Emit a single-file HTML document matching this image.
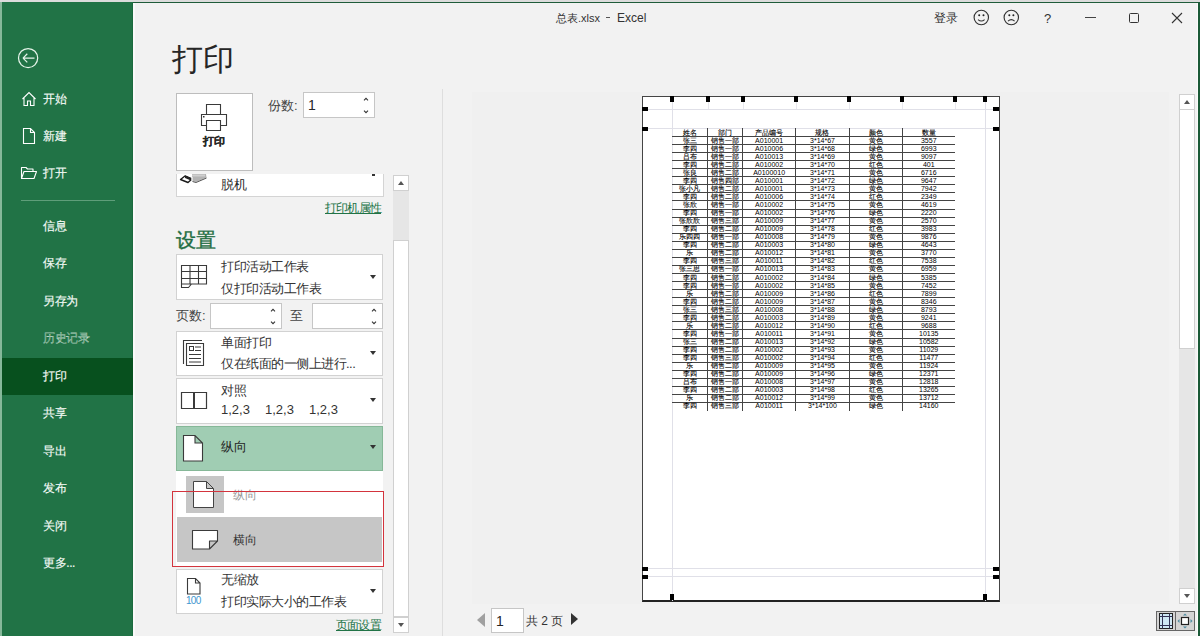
<!DOCTYPE html>
<html><head><meta charset="utf-8">
<style>
*{box-sizing:border-box;margin:0;padding:0}
html,body{width:1200px;height:636px;overflow:hidden;background:#f2f2f2;font-family:"Liberation Sans",sans-serif;color:#262626}
.a{position:absolute;white-space:nowrap}
#topstrip{left:0;top:0;width:1200px;height:2px;background:#dcdcdc}
#topline{left:133px;top:2px;width:1067px;height:1px;background:#1f5c3a}
#rightline{left:1198px;top:2px;width:2px;height:634px;background:#1b5a37}
#leftstrip{left:0;top:2px;width:2px;height:634px;background:#86b89a}
#side{left:2px;top:2px;width:131px;height:634px;background:#217346}
.nav{position:absolute;left:43px;color:#f4faf6;font-size:12px;letter-spacing:-0.4px;line-height:14px;-webkit-text-stroke:0.15px #f4faf6}
#sel{left:2px;top:358px;width:131px;height:37px;background:#07501e}
#sep{left:21px;top:200px;width:94px;height:1px;background:#5f9e7a}

.box{left:176px;width:207px;background:#fff;border:1px solid #d2d2d2}
.t13{font-size:13px;letter-spacing:-0.5px;color:#333}
.arr{width:0;height:0;border-left:3.5px solid transparent;border-right:3.5px solid transparent;border-top:4px solid #333}
.tri-up{width:0;height:0;border-left:3.5px solid transparent;border-right:3.5px solid transparent;border-bottom:4px solid #555}
.tri-dn{width:0;height:0;border-left:3.5px solid transparent;border-right:3.5px solid transparent;border-top:4px solid #555}
.tc{font-size:7px;line-height:8px;text-align:center;color:#000}
.zh{-webkit-text-stroke:0.12px #000;color:#000}
</style></head><body>
<div class="a" id="topstrip"></div>
<div class="a" id="side"></div>
<div class="a" id="leftstrip"></div>
<div class="a" id="sel"></div>
<div class="a" id="sep"></div>
<div class="a" id="topline"></div>
<div class="a" id="rightline"></div>
<div class="a" style="left:1197px;top:3px;width:1px;height:633px;background:#fbfbfb"></div>

<!-- sidebar -->
<svg class="a" style="left:17px;top:47px" width="23" height="23" viewBox="0 0 23 23"><circle cx="11.1" cy="11.1" r="9.6" fill="none" stroke="#e6f4ea" stroke-width="1.25"/><path d="M6 11.1H17.5M6 11.1L10.3 6.8M6 11.1L10.3 15.4" fill="none" stroke="#e6f4ea" stroke-width="1.25"/></svg>
<div class="nav" style="top:92px">开始</div>
<div class="nav" style="top:129px">新建</div>
<div class="nav" style="top:166px">打开</div>
<div class="nav" style="top:219px">信息</div>
<div class="nav" style="top:256px">保存</div>
<div class="nav" style="top:294px">另存为</div>
<div class="nav" style="top:331px;color:#6ea585">历史记录</div>
<div class="nav" style="top:369px">打印</div>
<div class="nav" style="top:406px">共享</div>
<div class="nav" style="top:444px">导出</div>
<div class="nav" style="top:481px">发布</div>
<div class="nav" style="top:519px">关闭</div>
<div class="nav" style="top:556px">更多...</div>

<!-- title bar -->
<div class="a" style="left:556px;top:11px;font-size:11px;color:#333">总表.xlsx</div><div class="a" style="left:606px;top:17px;width:4px;height:1px;background:#555"></div><div class="a" style="left:617px;top:11px;font-size:12px;color:#333">Excel</div>

<!-- heading -->
<div class="a" style="left:172px;top:39px;font-size:31px;color:#262626">打印</div>


<!-- sidebar icons -->
<svg class="a" style="left:20px;top:90px" width="18" height="18" viewBox="0 0 18 18"><path d="M2.5 9L9 2.5L15.5 9M4 7.5V15.5H7.5V11H10.5V15.5H14V7.5" fill="none" stroke="#fff" stroke-width="1.1" stroke-linejoin="miter"/></svg>
<svg class="a" style="left:21px;top:127px" width="16" height="18" viewBox="0 0 16 18"><path d="M2.5 1.5H9.5L13.5 5.5V16.5H2.5Z M9.5 1.5V5.5H13.5" fill="none" stroke="#fff" stroke-width="1.1"/></svg>
<svg class="a" style="left:20px;top:166px" width="18" height="14" viewBox="0 0 18 14"><path d="M1.5 12.5V1.5H6L7.5 3H13V5.5 M1.5 12.5L4 5.5H16.5L14 12.5Z" fill="none" stroke="#fff" stroke-width="1.1" stroke-linejoin="round"/></svg>

<!-- content white edge -->
<div class="a" style="left:132px;top:3px;width:1px;height:355px;background:#1b6a3e"></div><div class="a" style="left:132px;top:395px;width:1px;height:241px;background:#1b6a3e"></div>
<div class="a" style="left:133px;top:3px;width:2px;height:633px;background:#fafafa"></div>

<!-- print button -->
<div class="a" style="left:176px;top:93px;width:77px;height:78px;background:#fff;border:1px solid #bdbdbd"></div>
<svg class="a" style="left:199px;top:103px" width="30" height="30" viewBox="0 0 30 30"><path d="M7.5 11.5V1.5H21.5V11.5 M7.5 22.5H2.5V11.5H27.5V22.5H21.5 M7.5 17.5H21.5V27.5H7.5Z" fill="none" stroke="#3a3a3a" stroke-width="1.1"/><rect x="4" y="13" width="1.5" height="1.5" fill="#333"/></svg>
<div class="a" style="left:203px;top:134px;font-size:11px;font-weight:bold;color:#262626;-webkit-text-stroke:0.2px #262626">打印</div>

<div class="a" style="left:268px;top:97px;font-size:13px;color:#444">份数:</div>
<div class="a" style="left:303px;top:92px;width:72px;height:26px;background:#fff;border:1px solid #c6c6c6"></div>
<div class="a" style="left:308px;top:97px;font-size:14px;color:#262626">1</div>
<svg class="a" style="left:362px;top:95px" width="8" height="20" viewBox="0 0 8 20"><path d="M2 5.3L4 3.3L6 5.3 M2 15.7L4 17.7L6 15.7" fill="none" stroke="#333" stroke-width="1.1"/></svg>

<!-- settings scroll region -->
<div class="a" style="left:171px;top:174px;width:220px;height:462px;overflow:hidden">
  <div class="a" style="left:5px;top:-30px;width:208px;height:53px;background:#fff;border:1px solid #d4d4d4"></div>
  <div class="a" style="left:201px;top:0px;width:3px;height:2px;background:#333"></div>
</div>
<svg class="a" style="left:172px;top:174px" width="40" height="12" viewBox="0 174 40 12"><path d="M8.5 179.5L13 176L20 179L16 182.5Z" fill="#fff" stroke="#1a1a1a" stroke-width="1.4" stroke-linejoin="round"/><path d="M13 175.5L20 178.5V181L13 178Z" fill="#222"/><path d="M20 174H34L34.5 177.5L24 182L20 181Z" fill="#b4b4b4"/><path d="M20 174.5H33V176.5H20Z" fill="#cfcfcf"/><path d="M20.5 181.5L24 182.5L34.5 178" fill="none" stroke="#555" stroke-width="1"/><path d="M20 177V181" stroke="#eee" stroke-width="1.5"/></svg>
<div class="a" style="left:221px;top:176px;font-size:13px;color:#262626">脱机</div>
<div class="a" style="left:325px;top:200px;font-size:12px;letter-spacing:-0.8px;color:#217346;text-decoration:underline">打印机属性</div>

<div class="a" style="left:176px;top:227px;font-size:20px;color:#1f6e43;-webkit-text-stroke:0.4px #1f6e43">设置</div>

<!-- box1 -->
<div class="a box" style="top:254px;height:46px"></div>
<svg class="a" style="left:179px;top:263px" width="30" height="27" viewBox="0 0 30 27"><path d="M2.5 2.5H27.5V21H12.5L9.5 24.5H2.5Z M2.5 8.5H27.5 M2.5 15.5H27.5 M2.5 21H12.5 M11 2.5V21 M19.5 2.5V21" fill="none" stroke="#3a3a3a" stroke-width="1.1"/></svg>
<div class="a t13" style="left:221px;top:258px">打印活动工作表</div>
<div class="a t13" style="left:221px;top:280px">仅打印活动工作表</div>
<div class="a arr" style="left:370px;top:275px"></div>

<div class="a" style="left:176px;top:307px;font-size:13px;color:#444">页数:</div>
<div class="a" style="left:210px;top:303px;width:72px;height:26px;background:#fff;border:1px solid #c6c6c6"></div>
<svg class="a" style="left:269px;top:306px" width="8" height="20" viewBox="0 0 8 20"><path d="M2 5.3L4 3.3L6 5.3 M2 15.7L4 17.7L6 15.7" fill="none" stroke="#333" stroke-width="1.1"/></svg>
<div class="a" style="left:290px;top:307px;font-size:13px;color:#444">至</div>
<div class="a" style="left:312px;top:303px;width:71px;height:26px;background:#fff;border:1px solid #c6c6c6"></div>
<svg class="a" style="left:370px;top:306px" width="8" height="20" viewBox="0 0 8 20"><path d="M2 5.3L4 3.3L6 5.3 M2 15.7L4 17.7L6 15.7" fill="none" stroke="#333" stroke-width="1.1"/></svg>

<!-- box2 -->
<div class="a box" style="top:331px;height:45px"></div>
<svg class="a" style="left:181px;top:338px" width="26" height="30" viewBox="0 0 26 30"><path d="M5.5 5.5H22.5V27.5H5.5Z M2.5 26V2.5H21" fill="none" stroke="#3a3a3a" stroke-width="1.1"/><rect x="8.5" y="8.5" width="4" height="4" fill="none" stroke="#3a3a3a" stroke-width="1"/><path d="M14 9H20 M14 12.5H20 M8 16.5H20 M8 20.5H20 M8 24H20" fill="none" stroke="#3a3a3a" stroke-width="1"/></svg>
<div class="a t13" style="left:221px;top:334px">单面打印</div>
<div class="a t13" style="left:221px;top:355px">仅在纸面的一侧上进行...</div>
<div class="a arr" style="left:370px;top:351px"></div>

<!-- box3 -->
<div class="a box" style="top:378px;height:46px"></div>
<svg class="a" style="left:179px;top:391px" width="30" height="20" viewBox="0 0 30 20"><path d="M2.5 1.5H27.5V17.5H2.5Z" fill="none" stroke="#3a3a3a" stroke-width="1.2"/><path d="M15 1.5V17.5" stroke="#3a3a3a" stroke-width="2"/></svg>
<div class="a t13" style="left:221px;top:382px">对照</div>
<div class="a t13" style="left:221px;top:402px;letter-spacing:0">1,2,3</div><div class="a t13" style="left:265px;top:402px;letter-spacing:0">1,2,3</div><div class="a t13" style="left:309px;top:402px;letter-spacing:0">1,2,3</div>
<div class="a arr" style="left:370px;top:398px"></div>

<!-- box4 selected -->
<div class="a" style="left:176px;top:426px;width:207px;height:45px;background:#a0cdb3;border:1px solid #86b898"></div>
<svg class="a" style="left:182px;top:434px" width="23" height="29" viewBox="0 0 23 29"><path d="M1.5 1.5H13L20.5 9V27H1.5Z M13 1.5V9H20.5" fill="#fff" stroke="#3a3a3a" stroke-width="1.1"/></svg>
<div class="a t13" style="left:221px;top:438px;color:#262626">纵向</div>
<div class="a arr" style="left:370px;top:445px"></div>

<!-- dropdown -->
<div class="a" style="left:176px;top:471px;width:207px;height:95px;background:#fff"></div>
<div class="a" style="left:186px;top:476px;width:38px;height:37px;background:#c6c6c6"></div>
<svg class="a" style="left:192px;top:480px" width="24" height="30" viewBox="0 0 24 30"><path d="M1.5 1.5H14.5L21.5 8.5V27.5H1.5Z M14.5 1.5V8.5H21.5" fill="#fff" stroke="#444" stroke-width="1"/></svg>
<div class="a" style="left:233px;top:487px;font-size:12px;color:#9a9a9a">纵向</div>
<div class="a" style="left:177px;top:517px;width:205px;height:45px;background:#c6c6c6"></div>
<svg class="a" style="left:191px;top:529px" width="29" height="22" viewBox="0 0 29 22"><path d="M1.5 1.5H26.5V12L18.5 20H1.5Z M26.5 12H18.5V20" fill="#fff" stroke="#3a3a3a" stroke-width="1.1" stroke-linejoin="round"/></svg>
<div class="a" style="left:233px;top:532px;font-size:12px;color:#333">横向</div>
<div class="a" style="left:172px;top:491px;width:212px;height:76px;border:1.7px solid #d3343d"></div>

<!-- box5 -->
<div class="a box" style="top:569px;height:45px"></div>
<svg class="a" style="left:185px;top:577px" width="18" height="19" viewBox="0 0 18 19"><path d="M2.5 1.5H10.5L15 6V17H2.5Z M10.5 1.5V6H15" fill="#fff" stroke="#3a3a3a" stroke-width="1.1"/></svg>
<div class="a" style="left:186px;top:595px;font-size:10px;color:#4096d0;letter-spacing:-0.7px">100</div>
<div class="a t13" style="left:221px;top:571px">无缩放</div>
<div class="a t13" style="left:221px;top:593px">打印实际大小的工作表</div>
<div class="a arr" style="left:370px;top:589px"></div>
<div class="a" style="left:336px;top:617px;font-size:12px;letter-spacing:-0.8px;color:#217346;text-decoration:underline">页面设置</div>

<!-- scrollbar 1 -->
<div class="a" style="left:393px;top:175px;width:16px;height:458px;background:#e6e6e6"></div>
<div class="a" style="left:393px;top:175px;width:16px;height:16px;background:#fff;border:1px solid #d0d0d0"></div>
<div class="a tri-up" style="left:398px;top:181px"></div>
<div class="a" style="left:393px;top:240px;width:16px;height:377px;background:#fff;border:1px solid #d0d0d0"></div>
<div class="a" style="left:393px;top:617px;width:16px;height:16px;background:#fff;border:1px solid #d0d0d0"></div>
<div class="a tri-dn" style="left:398px;top:623px"></div>
<div class="a" style="left:442px;top:89px;width:1px;height:547px;background:#dedede"></div>

<div class="a" style="left:472px;top:92px;width:697px;height:512px;background:#f0f0f0"></div>
<!-- preview -->
<div class="a" style="left:642px;top:96px;width:358px;height:506px;background:#fff;border:1px solid #444;border-bottom:2px solid #222"></div>
<div class="a" style="left:643px;top:109px;width:356px;height:1px;background:#e0e0e8"></div>
<div class="a" style="left:643px;top:128px;width:356px;height:1px;background:#e0e0e8"></div>
<div class="a" style="left:643px;top:568px;width:356px;height:1px;background:#e0e0e8"></div>
<div class="a" style="left:643px;top:576px;width:356px;height:1px;background:#e0e0e8"></div>
<div class="a" style="left:672px;top:97px;width:1px;height:504px;background:#e0e0e8"></div>
<div class="a" style="left:985px;top:97px;width:1px;height:504px;background:#e0e0e8"></div>
<div class="a" style="left:708px;top:97px;width:1px;height:12px;background:#e8e8ee"></div>
<div class="a" style="left:743px;top:97px;width:1px;height:12px;background:#e8e8ee"></div>
<div class="a" style="left:796px;top:97px;width:1px;height:12px;background:#e8e8ee"></div>
<div class="a" style="left:849px;top:97px;width:1px;height:12px;background:#e8e8ee"></div>
<div class="a" style="left:902px;top:97px;width:1px;height:12px;background:#e8e8ee"></div>
<div class="a" style="left:955px;top:97px;width:1px;height:12px;background:#e8e8ee"></div>
<div class="a" style="left:670px;top:96px;width:4px;height:6px;background:#000"></div>
<div class="a" style="left:706px;top:96px;width:4px;height:6px;background:#000"></div>
<div class="a" style="left:741px;top:96px;width:4px;height:6px;background:#000"></div>
<div class="a" style="left:794px;top:96px;width:4px;height:6px;background:#000"></div>
<div class="a" style="left:847px;top:96px;width:4px;height:6px;background:#000"></div>
<div class="a" style="left:900px;top:96px;width:4px;height:6px;background:#000"></div>
<div class="a" style="left:953px;top:96px;width:4px;height:6px;background:#000"></div>
<div class="a" style="left:983px;top:96px;width:4px;height:6px;background:#000"></div>
<div class="a" style="left:642px;top:107px;width:6px;height:4px;background:#000"></div>
<div class="a" style="left:993px;top:107px;width:6px;height:4px;background:#000"></div>
<div class="a" style="left:642px;top:127px;width:6px;height:4px;background:#000"></div>
<div class="a" style="left:993px;top:127px;width:6px;height:4px;background:#000"></div>
<div class="a" style="left:642px;top:567px;width:6px;height:4px;background:#000"></div>
<div class="a" style="left:993px;top:567px;width:6px;height:4px;background:#000"></div>
<div class="a" style="left:642px;top:575px;width:6px;height:4px;background:#000"></div>
<div class="a" style="left:993px;top:575px;width:6px;height:4px;background:#000"></div>
<div class="a" style="left:670px;top:594px;width:4px;height:6px;background:#000"></div>
<div class="a" style="left:983px;top:594px;width:4px;height:6px;background:#000"></div>
<div class="a" style="left:672px;top:136.00px;width:283px;height:1px;background:#444"></div>
<div class="a" style="left:672px;top:144.06px;width:283px;height:1px;background:#444"></div>
<div class="a" style="left:672px;top:152.12px;width:283px;height:1px;background:#444"></div>
<div class="a" style="left:672px;top:160.18px;width:283px;height:1px;background:#444"></div>
<div class="a" style="left:672px;top:168.24px;width:283px;height:1px;background:#444"></div>
<div class="a" style="left:672px;top:176.30px;width:283px;height:1px;background:#444"></div>
<div class="a" style="left:672px;top:184.36px;width:283px;height:1px;background:#444"></div>
<div class="a" style="left:672px;top:192.42px;width:283px;height:1px;background:#444"></div>
<div class="a" style="left:672px;top:200.48px;width:283px;height:1px;background:#444"></div>
<div class="a" style="left:672px;top:208.54px;width:283px;height:1px;background:#444"></div>
<div class="a" style="left:672px;top:216.60px;width:283px;height:1px;background:#444"></div>
<div class="a" style="left:672px;top:224.66px;width:283px;height:1px;background:#444"></div>
<div class="a" style="left:672px;top:232.72px;width:283px;height:1px;background:#444"></div>
<div class="a" style="left:672px;top:240.78px;width:283px;height:1px;background:#444"></div>
<div class="a" style="left:672px;top:248.84px;width:283px;height:1px;background:#444"></div>
<div class="a" style="left:672px;top:256.90px;width:283px;height:1px;background:#444"></div>
<div class="a" style="left:672px;top:264.96px;width:283px;height:1px;background:#444"></div>
<div class="a" style="left:672px;top:273.02px;width:283px;height:1px;background:#444"></div>
<div class="a" style="left:672px;top:281.08px;width:283px;height:1px;background:#444"></div>
<div class="a" style="left:672px;top:289.14px;width:283px;height:1px;background:#444"></div>
<div class="a" style="left:672px;top:297.20px;width:283px;height:1px;background:#444"></div>
<div class="a" style="left:672px;top:305.26px;width:283px;height:1px;background:#444"></div>
<div class="a" style="left:672px;top:313.32px;width:283px;height:1px;background:#444"></div>
<div class="a" style="left:672px;top:321.38px;width:283px;height:1px;background:#444"></div>
<div class="a" style="left:672px;top:329.44px;width:283px;height:1px;background:#444"></div>
<div class="a" style="left:672px;top:337.50px;width:283px;height:1px;background:#444"></div>
<div class="a" style="left:672px;top:345.56px;width:283px;height:1px;background:#444"></div>
<div class="a" style="left:672px;top:353.62px;width:283px;height:1px;background:#444"></div>
<div class="a" style="left:672px;top:361.68px;width:283px;height:1px;background:#444"></div>
<div class="a" style="left:672px;top:369.74px;width:283px;height:1px;background:#444"></div>
<div class="a" style="left:672px;top:377.80px;width:283px;height:1px;background:#444"></div>
<div class="a" style="left:672px;top:385.86px;width:283px;height:1px;background:#444"></div>
<div class="a" style="left:672px;top:393.92px;width:283px;height:1px;background:#444"></div>
<div class="a" style="left:672px;top:401.98px;width:283px;height:1px;background:#444"></div>
<div class="a" style="left:707.0px;top:128px;width:1px;height:282.5px;background:#444"></div>
<div class="a" style="left:742.0px;top:128px;width:1px;height:282.5px;background:#444"></div>
<div class="a" style="left:795.2px;top:128px;width:1px;height:282.5px;background:#444"></div>
<div class="a" style="left:848.8px;top:128px;width:1px;height:282.5px;background:#444"></div>
<div class="a" style="left:902.0px;top:128px;width:1px;height:282.5px;background:#444"></div>
<div class="a tc zh" style="left:672.0px;top:128.50px;width:35.5px">姓名</div>
<div class="a tc zh" style="left:707.5px;top:128.50px;width:35.0px">部门</div>
<div class="a tc zh" style="left:742.5px;top:128.50px;width:53.2px">产品编号</div>
<div class="a tc zh" style="left:795.7px;top:128.50px;width:53.6px">规格</div>
<div class="a tc zh" style="left:849.3px;top:128.50px;width:53.2px">颜色</div>
<div class="a tc zh" style="left:902.5px;top:128.50px;width:52.5px">数量</div>
<div class="a tc zh" style="left:672.0px;top:136.50px;width:35.5px">张三</div>
<div class="a tc zh" style="left:707.5px;top:136.50px;width:35.0px">销售一部</div>
<div class="a tc" style="left:742.5px;top:136.50px;width:53.2px">A010001</div>
<div class="a tc" style="left:795.7px;top:136.50px;width:53.6px">3*14*67</div>
<div class="a tc zh" style="left:849.3px;top:136.50px;width:53.2px">黄色</div>
<div class="a tc" style="left:902.5px;top:136.50px;width:52.5px">3557</div>
<div class="a tc zh" style="left:672.0px;top:144.56px;width:35.5px">李四</div>
<div class="a tc zh" style="left:707.5px;top:144.56px;width:35.0px">销售一部</div>
<div class="a tc" style="left:742.5px;top:144.56px;width:53.2px">A010006</div>
<div class="a tc" style="left:795.7px;top:144.56px;width:53.6px">3*14*68</div>
<div class="a tc zh" style="left:849.3px;top:144.56px;width:53.2px">绿色</div>
<div class="a tc" style="left:902.5px;top:144.56px;width:52.5px">6993</div>
<div class="a tc zh" style="left:672.0px;top:152.62px;width:35.5px">吕布</div>
<div class="a tc zh" style="left:707.5px;top:152.62px;width:35.0px">销售一部</div>
<div class="a tc" style="left:742.5px;top:152.62px;width:53.2px">A010013</div>
<div class="a tc" style="left:795.7px;top:152.62px;width:53.6px">3*14*69</div>
<div class="a tc zh" style="left:849.3px;top:152.62px;width:53.2px">黄色</div>
<div class="a tc" style="left:902.5px;top:152.62px;width:52.5px">9097</div>
<div class="a tc zh" style="left:672.0px;top:160.68px;width:35.5px">李四</div>
<div class="a tc zh" style="left:707.5px;top:160.68px;width:35.0px">销售二部</div>
<div class="a tc" style="left:742.5px;top:160.68px;width:53.2px">A010002</div>
<div class="a tc" style="left:795.7px;top:160.68px;width:53.6px">3*14*70</div>
<div class="a tc zh" style="left:849.3px;top:160.68px;width:53.2px">红色</div>
<div class="a tc" style="left:902.5px;top:160.68px;width:52.5px">401</div>
<div class="a tc zh" style="left:672.0px;top:168.74px;width:35.5px">张良</div>
<div class="a tc zh" style="left:707.5px;top:168.74px;width:35.0px">销售二部</div>
<div class="a tc" style="left:742.5px;top:168.74px;width:53.2px">A0100010</div>
<div class="a tc" style="left:795.7px;top:168.74px;width:53.6px">3*14*71</div>
<div class="a tc zh" style="left:849.3px;top:168.74px;width:53.2px">黄色</div>
<div class="a tc" style="left:902.5px;top:168.74px;width:52.5px">6716</div>
<div class="a tc zh" style="left:672.0px;top:176.80px;width:35.5px">李四</div>
<div class="a tc zh" style="left:707.5px;top:176.80px;width:35.0px">销售四部</div>
<div class="a tc" style="left:742.5px;top:176.80px;width:53.2px">A010001</div>
<div class="a tc" style="left:795.7px;top:176.80px;width:53.6px">3*14*72</div>
<div class="a tc zh" style="left:849.3px;top:176.80px;width:53.2px">绿色</div>
<div class="a tc" style="left:902.5px;top:176.80px;width:52.5px">9647</div>
<div class="a tc zh" style="left:672.0px;top:184.86px;width:35.5px">张小凡</div>
<div class="a tc zh" style="left:707.5px;top:184.86px;width:35.0px">销售二部</div>
<div class="a tc" style="left:742.5px;top:184.86px;width:53.2px">A010001</div>
<div class="a tc" style="left:795.7px;top:184.86px;width:53.6px">3*14*73</div>
<div class="a tc zh" style="left:849.3px;top:184.86px;width:53.2px">黄色</div>
<div class="a tc" style="left:902.5px;top:184.86px;width:52.5px">7942</div>
<div class="a tc zh" style="left:672.0px;top:192.92px;width:35.5px">李四</div>
<div class="a tc zh" style="left:707.5px;top:192.92px;width:35.0px">销售二部</div>
<div class="a tc" style="left:742.5px;top:192.92px;width:53.2px">A010006</div>
<div class="a tc" style="left:795.7px;top:192.92px;width:53.6px">3*14*74</div>
<div class="a tc zh" style="left:849.3px;top:192.92px;width:53.2px">红色</div>
<div class="a tc" style="left:902.5px;top:192.92px;width:52.5px">2349</div>
<div class="a tc zh" style="left:672.0px;top:200.98px;width:35.5px">张欣</div>
<div class="a tc zh" style="left:707.5px;top:200.98px;width:35.0px">销售一部</div>
<div class="a tc" style="left:742.5px;top:200.98px;width:53.2px">A010002</div>
<div class="a tc" style="left:795.7px;top:200.98px;width:53.6px">3*14*75</div>
<div class="a tc zh" style="left:849.3px;top:200.98px;width:53.2px">黄色</div>
<div class="a tc" style="left:902.5px;top:200.98px;width:52.5px">4619</div>
<div class="a tc zh" style="left:672.0px;top:209.04px;width:35.5px">李四</div>
<div class="a tc zh" style="left:707.5px;top:209.04px;width:35.0px">销售一部</div>
<div class="a tc" style="left:742.5px;top:209.04px;width:53.2px">A010002</div>
<div class="a tc" style="left:795.7px;top:209.04px;width:53.6px">3*14*76</div>
<div class="a tc zh" style="left:849.3px;top:209.04px;width:53.2px">绿色</div>
<div class="a tc" style="left:902.5px;top:209.04px;width:52.5px">2220</div>
<div class="a tc zh" style="left:672.0px;top:217.10px;width:35.5px">张欣欣</div>
<div class="a tc zh" style="left:707.5px;top:217.10px;width:35.0px">销售三部</div>
<div class="a tc" style="left:742.5px;top:217.10px;width:53.2px">A010009</div>
<div class="a tc" style="left:795.7px;top:217.10px;width:53.6px">3*14*77</div>
<div class="a tc zh" style="left:849.3px;top:217.10px;width:53.2px">黄色</div>
<div class="a tc" style="left:902.5px;top:217.10px;width:52.5px">2570</div>
<div class="a tc zh" style="left:672.0px;top:225.16px;width:35.5px">李四</div>
<div class="a tc zh" style="left:707.5px;top:225.16px;width:35.0px">销售二部</div>
<div class="a tc" style="left:742.5px;top:225.16px;width:53.2px">A010009</div>
<div class="a tc" style="left:795.7px;top:225.16px;width:53.6px">3*14*78</div>
<div class="a tc zh" style="left:849.3px;top:225.16px;width:53.2px">红色</div>
<div class="a tc" style="left:902.5px;top:225.16px;width:52.5px">3983</div>
<div class="a tc zh" style="left:672.0px;top:233.22px;width:35.5px">乐四四</div>
<div class="a tc zh" style="left:707.5px;top:233.22px;width:35.0px">销售一部</div>
<div class="a tc" style="left:742.5px;top:233.22px;width:53.2px">A010008</div>
<div class="a tc" style="left:795.7px;top:233.22px;width:53.6px">3*14*79</div>
<div class="a tc zh" style="left:849.3px;top:233.22px;width:53.2px">黄色</div>
<div class="a tc" style="left:902.5px;top:233.22px;width:52.5px">9876</div>
<div class="a tc zh" style="left:672.0px;top:241.28px;width:35.5px">李四</div>
<div class="a tc zh" style="left:707.5px;top:241.28px;width:35.0px">销售二部</div>
<div class="a tc" style="left:742.5px;top:241.28px;width:53.2px">A010003</div>
<div class="a tc" style="left:795.7px;top:241.28px;width:53.6px">3*14*80</div>
<div class="a tc zh" style="left:849.3px;top:241.28px;width:53.2px">绿色</div>
<div class="a tc" style="left:902.5px;top:241.28px;width:52.5px">4643</div>
<div class="a tc zh" style="left:672.0px;top:249.34px;width:35.5px">乐</div>
<div class="a tc zh" style="left:707.5px;top:249.34px;width:35.0px">销售二部</div>
<div class="a tc" style="left:742.5px;top:249.34px;width:53.2px">A010012</div>
<div class="a tc" style="left:795.7px;top:249.34px;width:53.6px">3*14*81</div>
<div class="a tc zh" style="left:849.3px;top:249.34px;width:53.2px">黄色</div>
<div class="a tc" style="left:902.5px;top:249.34px;width:52.5px">3770</div>
<div class="a tc zh" style="left:672.0px;top:257.40px;width:35.5px">李四</div>
<div class="a tc zh" style="left:707.5px;top:257.40px;width:35.0px">销售三部</div>
<div class="a tc" style="left:742.5px;top:257.40px;width:53.2px">A010011</div>
<div class="a tc" style="left:795.7px;top:257.40px;width:53.6px">3*14*82</div>
<div class="a tc zh" style="left:849.3px;top:257.40px;width:53.2px">红色</div>
<div class="a tc" style="left:902.5px;top:257.40px;width:52.5px">7538</div>
<div class="a tc zh" style="left:672.0px;top:265.46px;width:35.5px">张三思</div>
<div class="a tc zh" style="left:707.5px;top:265.46px;width:35.0px">销售一部</div>
<div class="a tc" style="left:742.5px;top:265.46px;width:53.2px">A010013</div>
<div class="a tc" style="left:795.7px;top:265.46px;width:53.6px">3*14*83</div>
<div class="a tc zh" style="left:849.3px;top:265.46px;width:53.2px">黄色</div>
<div class="a tc" style="left:902.5px;top:265.46px;width:52.5px">6959</div>
<div class="a tc zh" style="left:672.0px;top:273.52px;width:35.5px">李四</div>
<div class="a tc zh" style="left:707.5px;top:273.52px;width:35.0px">销售二部</div>
<div class="a tc" style="left:742.5px;top:273.52px;width:53.2px">A010002</div>
<div class="a tc" style="left:795.7px;top:273.52px;width:53.6px">3*14*84</div>
<div class="a tc zh" style="left:849.3px;top:273.52px;width:53.2px">绿色</div>
<div class="a tc" style="left:902.5px;top:273.52px;width:52.5px">5385</div>
<div class="a tc zh" style="left:672.0px;top:281.58px;width:35.5px">李四</div>
<div class="a tc zh" style="left:707.5px;top:281.58px;width:35.0px">销售一部</div>
<div class="a tc" style="left:742.5px;top:281.58px;width:53.2px">A010002</div>
<div class="a tc" style="left:795.7px;top:281.58px;width:53.6px">3*14*85</div>
<div class="a tc zh" style="left:849.3px;top:281.58px;width:53.2px">黄色</div>
<div class="a tc" style="left:902.5px;top:281.58px;width:52.5px">7452</div>
<div class="a tc zh" style="left:672.0px;top:289.64px;width:35.5px">乐</div>
<div class="a tc zh" style="left:707.5px;top:289.64px;width:35.0px">销售二部</div>
<div class="a tc" style="left:742.5px;top:289.64px;width:53.2px">A010009</div>
<div class="a tc" style="left:795.7px;top:289.64px;width:53.6px">3*14*86</div>
<div class="a tc zh" style="left:849.3px;top:289.64px;width:53.2px">红色</div>
<div class="a tc" style="left:902.5px;top:289.64px;width:52.5px">7899</div>
<div class="a tc zh" style="left:672.0px;top:297.70px;width:35.5px">李四</div>
<div class="a tc zh" style="left:707.5px;top:297.70px;width:35.0px">销售二部</div>
<div class="a tc" style="left:742.5px;top:297.70px;width:53.2px">A010009</div>
<div class="a tc" style="left:795.7px;top:297.70px;width:53.6px">3*14*87</div>
<div class="a tc zh" style="left:849.3px;top:297.70px;width:53.2px">黄色</div>
<div class="a tc" style="left:902.5px;top:297.70px;width:52.5px">8346</div>
<div class="a tc zh" style="left:672.0px;top:305.76px;width:35.5px">张三</div>
<div class="a tc zh" style="left:707.5px;top:305.76px;width:35.0px">销售三部</div>
<div class="a tc" style="left:742.5px;top:305.76px;width:53.2px">A010008</div>
<div class="a tc" style="left:795.7px;top:305.76px;width:53.6px">3*14*88</div>
<div class="a tc zh" style="left:849.3px;top:305.76px;width:53.2px">绿色</div>
<div class="a tc" style="left:902.5px;top:305.76px;width:52.5px">8793</div>
<div class="a tc zh" style="left:672.0px;top:313.82px;width:35.5px">李四</div>
<div class="a tc zh" style="left:707.5px;top:313.82px;width:35.0px">销售二部</div>
<div class="a tc" style="left:742.5px;top:313.82px;width:53.2px">A010003</div>
<div class="a tc" style="left:795.7px;top:313.82px;width:53.6px">3*14*89</div>
<div class="a tc zh" style="left:849.3px;top:313.82px;width:53.2px">黄色</div>
<div class="a tc" style="left:902.5px;top:313.82px;width:52.5px">9241</div>
<div class="a tc zh" style="left:672.0px;top:321.88px;width:35.5px">乐</div>
<div class="a tc zh" style="left:707.5px;top:321.88px;width:35.0px">销售二部</div>
<div class="a tc" style="left:742.5px;top:321.88px;width:53.2px">A010012</div>
<div class="a tc" style="left:795.7px;top:321.88px;width:53.6px">3*14*90</div>
<div class="a tc zh" style="left:849.3px;top:321.88px;width:53.2px">红色</div>
<div class="a tc" style="left:902.5px;top:321.88px;width:52.5px">9688</div>
<div class="a tc zh" style="left:672.0px;top:329.94px;width:35.5px">李四</div>
<div class="a tc zh" style="left:707.5px;top:329.94px;width:35.0px">销售一部</div>
<div class="a tc" style="left:742.5px;top:329.94px;width:53.2px">A010011</div>
<div class="a tc" style="left:795.7px;top:329.94px;width:53.6px">3*14*91</div>
<div class="a tc zh" style="left:849.3px;top:329.94px;width:53.2px">黄色</div>
<div class="a tc" style="left:902.5px;top:329.94px;width:52.5px">10135</div>
<div class="a tc zh" style="left:672.0px;top:338.00px;width:35.5px">张三</div>
<div class="a tc zh" style="left:707.5px;top:338.00px;width:35.0px">销售二部</div>
<div class="a tc" style="left:742.5px;top:338.00px;width:53.2px">A010013</div>
<div class="a tc" style="left:795.7px;top:338.00px;width:53.6px">3*14*92</div>
<div class="a tc zh" style="left:849.3px;top:338.00px;width:53.2px">绿色</div>
<div class="a tc" style="left:902.5px;top:338.00px;width:52.5px">10582</div>
<div class="a tc zh" style="left:672.0px;top:346.06px;width:35.5px">李四</div>
<div class="a tc zh" style="left:707.5px;top:346.06px;width:35.0px">销售二部</div>
<div class="a tc" style="left:742.5px;top:346.06px;width:53.2px">A010002</div>
<div class="a tc" style="left:795.7px;top:346.06px;width:53.6px">3*14*93</div>
<div class="a tc zh" style="left:849.3px;top:346.06px;width:53.2px">黄色</div>
<div class="a tc" style="left:902.5px;top:346.06px;width:52.5px">11029</div>
<div class="a tc zh" style="left:672.0px;top:354.12px;width:35.5px">李四</div>
<div class="a tc zh" style="left:707.5px;top:354.12px;width:35.0px">销售三部</div>
<div class="a tc" style="left:742.5px;top:354.12px;width:53.2px">A010002</div>
<div class="a tc" style="left:795.7px;top:354.12px;width:53.6px">3*14*94</div>
<div class="a tc zh" style="left:849.3px;top:354.12px;width:53.2px">红色</div>
<div class="a tc" style="left:902.5px;top:354.12px;width:52.5px">11477</div>
<div class="a tc zh" style="left:672.0px;top:362.18px;width:35.5px">乐</div>
<div class="a tc zh" style="left:707.5px;top:362.18px;width:35.0px">销售二部</div>
<div class="a tc" style="left:742.5px;top:362.18px;width:53.2px">A010009</div>
<div class="a tc" style="left:795.7px;top:362.18px;width:53.6px">3*14*95</div>
<div class="a tc zh" style="left:849.3px;top:362.18px;width:53.2px">黄色</div>
<div class="a tc" style="left:902.5px;top:362.18px;width:52.5px">11924</div>
<div class="a tc zh" style="left:672.0px;top:370.24px;width:35.5px">李四</div>
<div class="a tc zh" style="left:707.5px;top:370.24px;width:35.0px">销售二部</div>
<div class="a tc" style="left:742.5px;top:370.24px;width:53.2px">A010009</div>
<div class="a tc" style="left:795.7px;top:370.24px;width:53.6px">3*14*96</div>
<div class="a tc zh" style="left:849.3px;top:370.24px;width:53.2px">绿色</div>
<div class="a tc" style="left:902.5px;top:370.24px;width:52.5px">12371</div>
<div class="a tc zh" style="left:672.0px;top:378.30px;width:35.5px">吕布</div>
<div class="a tc zh" style="left:707.5px;top:378.30px;width:35.0px">销售一部</div>
<div class="a tc" style="left:742.5px;top:378.30px;width:53.2px">A010008</div>
<div class="a tc" style="left:795.7px;top:378.30px;width:53.6px">3*14*97</div>
<div class="a tc zh" style="left:849.3px;top:378.30px;width:53.2px">黄色</div>
<div class="a tc" style="left:902.5px;top:378.30px;width:52.5px">12818</div>
<div class="a tc zh" style="left:672.0px;top:386.36px;width:35.5px">李四</div>
<div class="a tc zh" style="left:707.5px;top:386.36px;width:35.0px">销售二部</div>
<div class="a tc" style="left:742.5px;top:386.36px;width:53.2px">A010003</div>
<div class="a tc" style="left:795.7px;top:386.36px;width:53.6px">3*14*98</div>
<div class="a tc zh" style="left:849.3px;top:386.36px;width:53.2px">红色</div>
<div class="a tc" style="left:902.5px;top:386.36px;width:52.5px">13265</div>
<div class="a tc zh" style="left:672.0px;top:394.42px;width:35.5px">乐</div>
<div class="a tc zh" style="left:707.5px;top:394.42px;width:35.0px">销售二部</div>
<div class="a tc" style="left:742.5px;top:394.42px;width:53.2px">A010012</div>
<div class="a tc" style="left:795.7px;top:394.42px;width:53.6px">3*14*99</div>
<div class="a tc zh" style="left:849.3px;top:394.42px;width:53.2px">黄色</div>
<div class="a tc" style="left:902.5px;top:394.42px;width:52.5px">13712</div>
<div class="a tc zh" style="left:672.0px;top:402.48px;width:35.5px">李四</div>
<div class="a tc zh" style="left:707.5px;top:402.48px;width:35.0px">销售三部</div>
<div class="a tc" style="left:742.5px;top:402.48px;width:53.2px">A010011</div>
<div class="a tc" style="left:795.7px;top:402.48px;width:53.6px">3*14*100</div>
<div class="a tc zh" style="left:849.3px;top:402.48px;width:53.2px">绿色</div>
<div class="a tc" style="left:902.5px;top:402.48px;width:52.5px">14160</div>
<!-- right scrollbar -->
<div class="a" style="left:1179px;top:94px;width:16px;height:510px;background:#e6e6e6"></div>
<div class="a" style="left:1179px;top:94px;width:16px;height:16px;background:#fff;border:1px solid #d0d0d0"></div>
<div class="a tri-up" style="left:1184px;top:100px"></div>
<div class="a" style="left:1179px;top:109px;width:16px;height:240px;background:#fff;border:1px solid #d0d0d0"></div>
<div class="a" style="left:1179px;top:588px;width:16px;height:16px;background:#fff;border:1px solid #d0d0d0"></div>
<div class="a tri-dn" style="left:1184px;top:594px"></div>

<!-- page nav -->
<div class="a" style="left:477px;top:613px;width:0;height:0;border-top:7px solid transparent;border-bottom:7px solid transparent;border-right:8px solid #a0a0a0"></div>
<div class="a" style="left:491px;top:608px;width:33px;height:25px;background:#fff;border:1px solid #c6c6c6"></div>
<div class="a" style="left:496px;top:613px;font-size:14px;color:#262626">1</div>
<div class="a" style="left:526px;top:613px;font-size:12px;color:#333">共 2 页</div>
<div class="a" style="left:571px;top:613px;width:0;height:0;border-top:6.5px solid transparent;border-bottom:6.5px solid transparent;border-left:7px solid #333"></div>

<!-- zoom buttons -->
<div class="a" style="left:1156px;top:611px;width:20px;height:20px;background:#d4d4d4;border:1px solid #666"></div>
<svg class="a" style="left:1159px;top:613px" width="14" height="16" viewBox="0 0 14 16"><rect x="0.5" y="0.5" width="13" height="15" fill="#cfe8f5" stroke="#222" stroke-width="1"/><path d="M0.5 3.5H13.5 M0.5 12.5H13.5 M3.5 0.5V15.5 M10.5 0.5V15.5" stroke="#335" stroke-width="1"/></svg>
<div class="a" style="left:1175px;top:611px;width:20px;height:20px;background:#d4d4d4;border:1px solid #666"></div>
<svg class="a" style="left:1177px;top:613px" width="16" height="16" viewBox="0 0 16 16"><rect x="4.5" y="4.5" width="7" height="7" fill="#fff" stroke="#222" stroke-width="1.2"/><path d="M8 0.5L6 2.5H10Z M8 15.5L6 13.5H10Z M0.5 8L2.5 6V10Z M15.5 8L13.5 6V10Z" fill="#4a8aa0"/></svg>

<!-- title bar right -->
<div class="a" style="left:934px;top:10px;font-size:12px;color:#333">登录</div>
<svg class="a" style="left:972px;top:8px" width="20" height="20" viewBox="972 8 20 20"><circle cx="981.3" cy="17.5" r="7.2" fill="none" stroke="#333" stroke-width="1.15"/><circle cx="979.2" cy="15.2" r="1" fill="#222"/><circle cx="983.5" cy="15.2" r="1" fill="#222"/><path d="M978 19.6Q981.3 22.4 984.6 19.6" fill="none" stroke="#333" stroke-width="1.1"/></svg>
<svg class="a" style="left:1002px;top:8px" width="20" height="20" viewBox="1002 8 20 20"><circle cx="1011.3" cy="17.5" r="7.2" fill="none" stroke="#333" stroke-width="1.15"/><circle cx="1009.3" cy="15.2" r="1" fill="#222"/><circle cx="1013.4" cy="15.2" r="1" fill="#222"/><path d="M1008 21.2Q1011.3 18.2 1014.6 21.2" fill="none" stroke="#333" stroke-width="1.1"/></svg>
<div class="a" style="left:1044px;top:11px;font-size:13px;color:#333">?</div>
<div class="a" style="left:1085px;top:17px;width:11px;height:1px;background:#444"></div>
<div class="a" style="left:1129px;top:13px;width:10px;height:10px;border:1.2px solid #333;border-radius:1.5px"></div>
<svg class="a" style="left:1171px;top:12px" width="12" height="12" viewBox="0 0 12 12"><path d="M1 1L11 11M11 1L1 11" stroke="#333" stroke-width="1.1"/></svg>
</body></html>
